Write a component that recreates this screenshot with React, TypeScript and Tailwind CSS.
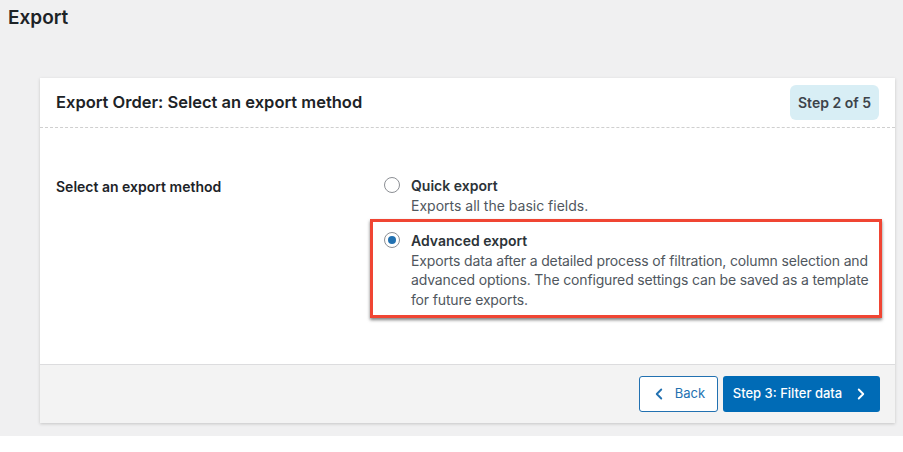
import { ChevronLeft, ChevronRight } from 'lucide-react'

const font = { fontFamily: 'Inter, "Noto Sans", sans-serif' }

function Radio({ checked }: { checked?: boolean }) {
  return (
    <span className="mt-[1px] flex h-4 w-4 shrink-0 items-center justify-center rounded-full border border-[#8c8f94] bg-white">
      {checked && <span className="h-2 w-2 rounded-full bg-[#2271b1]" />}
    </span>
  )
}

export default function App() {
  return (
    <div className="min-h-[452px] bg-white text-[#1d2327]" style={font}>
      <div className="h-[436px] bg-[#f0f0f1] pl-[40px] pr-[8px]">
        <h1 className="-ml-[32px] pt-[6px] text-[19px] leading-[24px] font-semibold text-[#1d2327]">Export</h1>
        <div className="mt-[48px] bg-white shadow-[0_1px_3px_rgba(0,0,0,0.18)]">
          <div className="flex h-[50px] items-center justify-between border-b border-dashed border-[#cfcfcf] pl-[16px] pr-[16px]">
            <h2 className="text-[16.5px] font-semibold">Export Order: Select an export method</h2>
            <span className="flex h-[35px] w-[89px] items-center justify-center rounded-[6px] bg-[#d8eef5] text-[14px] font-semibold text-[#3c434a]">
              Step 2 of 5
            </span>
          </div>

          <div className="flex h-[236px] pl-[16px] pt-[48px]">
            <div className="w-[314px] pt-[1px] text-[14px] leading-[20px] font-semibold">Select an export method</div>
            <div className="w-[512px]">
              <label className="flex gap-[11px] pl-[14px] text-[14px] leading-[19.5px]">
                <Radio />
                <span>
                  <span className="block font-semibold text-[#2c3338]">Quick export</span>
                  <span className="block text-[#50575e]">Exports all the basic fields.</span>
                </span>
              </label>
              <label className="mt-[4px] flex gap-[11px] border-[3px] border-[#f04533] pt-[9px] pb-[6px] pl-[11px] pr-[2px] text-[14px] leading-[19.5px] shadow-[0_2px_3px_rgba(0,0,0,0.5)]">
                <Radio checked />
                <span>
                  <span className="block font-semibold text-[#2c3338]">Advanced export</span>
                  <span className="block tracking-[-0.15px] text-[#50575e]">
                    Exports data after a detailed process of filtration, column selection and advanced options. The configured settings can be saved as a template for future exports.
                  </span>
                </span>
              </label>
            </div>
          </div>

          <div className="flex h-[59px] items-center justify-end gap-[5px] border-t border-[#dcdcde] bg-[#f3f3f3] pr-[15px]">
            <button className="flex h-[36px] w-[79px] items-center justify-center gap-[7px] rounded-[3px] border border-[#2271b1] bg-white pr-[2px] text-[13px] text-[#2271b1]">
              <ChevronLeft size={18} strokeWidth={2.5} />
              Back
            </button>
            <button className="flex h-[36px] w-[157px] items-center justify-center gap-[10px] rounded-[3px] bg-[#006bb6] text-[13px] font-medium text-white">
              Step 3: Filter data
              <ChevronRight size={18} strokeWidth={2.5} />
            </button>
          </div>
        </div>
      </div>
    </div>
  )
}
